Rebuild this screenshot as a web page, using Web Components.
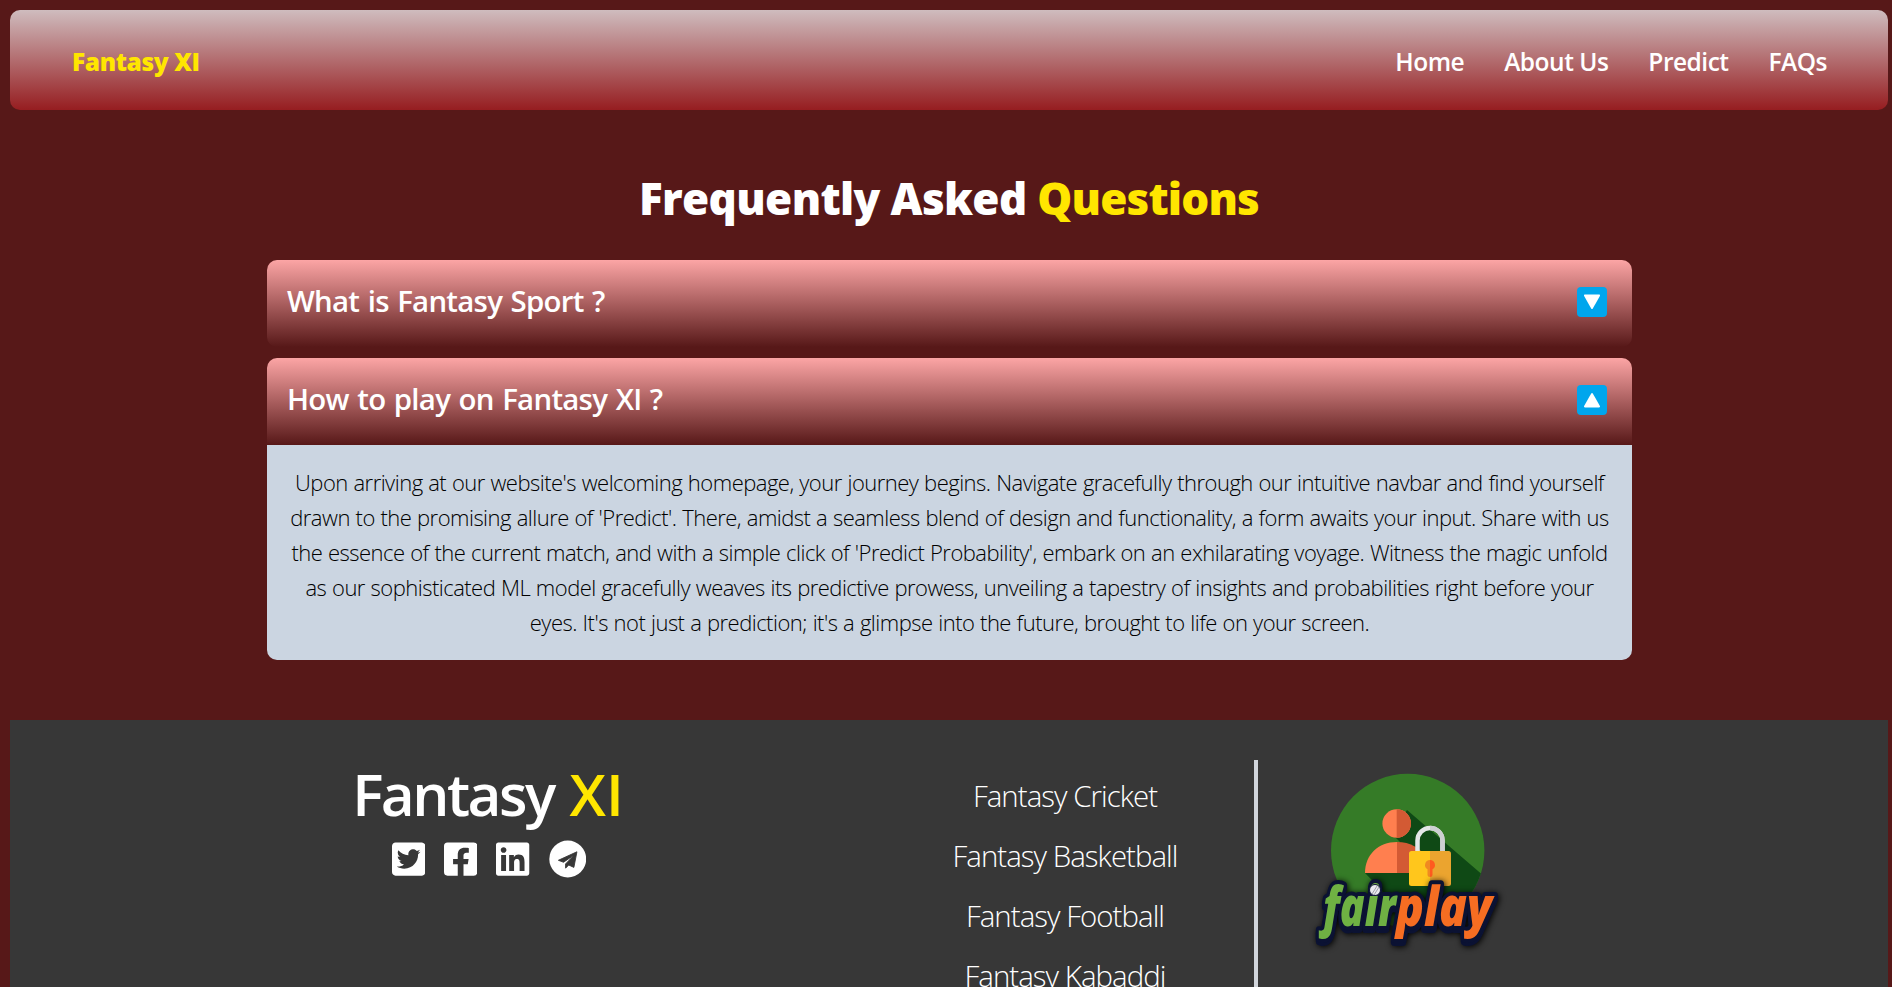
<!DOCTYPE html>
<html lang="en">
<head>
<meta charset="utf-8">
<title>Fantasy XI - FAQs</title>
<style>
html,body{margin:0;height:987px;overflow:hidden;background:#571818}
body{font-family:"Open Sans","Noto Sans",sans-serif;color:#fff}
</style>
</head>
<body>
<fx-page>
  <fx-navbar>
    <fx-link>Home</fx-link><fx-link>About Us</fx-link><fx-link>Predict</fx-link><fx-link>FAQs</fx-link>
  </fx-navbar>
  <fx-heading>Frequently Asked <span slot="accent">Questions</span></fx-heading>
  <fx-faq><span slot="title">What is Fantasy Sport ?</span></fx-faq>
  <fx-faq open><span slot="title">How to play on Fantasy XI ?</span>Upon arriving at our website's welcoming homepage, your journey begins. Navigate gracefully through our intuitive navbar and find yourself<br>drawn to the promising allure of 'Predict'. There, amidst a seamless blend of design and functionality, a form awaits your input. Share with us<br>the essence of the current match, and with a simple click of 'Predict Probability', embark on an exhilarating voyage. Witness the magic unfold<br>as our sophisticated ML model gracefully weaves its predictive prowess, unveiling a tapestry of insights and probabilities right before your<br>eyes. It's not just a prediction; it's a glimpse into the future, brought to life on your screen.</fx-faq>
  <fx-footer>
    <fx-brand slot="brand"></fx-brand>
    <span>Fantasy Cricket</span><span>Fantasy Basketball</span><span>Fantasy Football</span><span>Fantasy Kabaddi</span>
    <fx-fairplay slot="badge"></fx-fairplay>
  </fx-footer>
</fx-page>
<script>
const define = (name, html) => customElements.define(name, class extends HTMLElement {
  constructor() {
    super();
    this.attachShadow({ mode: 'open' }).innerHTML = html;
  }
});

define('fx-page', `
<style>:host{display:flex;flex-direction:column;box-sizing:border-box;height:987px;overflow:hidden;padding:10px 4px 0 10px}</style>
<slot></slot>`);

define('fx-navbar', `
<style>
:host{display:flex;justify-content:space-between;align-items:center;box-sizing:border-box;flex:none;height:100px;padding:2px 61px 0 62px;border-radius:10px;background:linear-gradient(#cfbcbe,#961d20)}
.logo{font-weight:800;font-size:24.5px;letter-spacing:-.4px;color:#ffe600}
nav{display:flex;gap:40px}
</style>
<div class="logo">Fantasy XI</div><nav><slot></slot></nav>`);

define('fx-link', `
<style>:host{display:block;font-weight:600;font-size:24.5px;letter-spacing:-.5px;white-space:nowrap}</style>
<slot></slot>`);

define('fx-heading', `
<style>
:host{display:block;flex:none;margin:58px 0 32px;text-align:center;font-weight:800;font-size:44px;line-height:60px;letter-spacing:-.65px;white-space:nowrap}
.accent{color:#ffe600;letter-spacing:-.85px}
</style>
<slot></slot><span class="accent"><slot name="accent"></slot></span>`);

define('fx-faq', `
<style>
:host{display:block;flex:none;width:1365px;margin:0 0 11px 257px;border-radius:10px;overflow:hidden}
:host([open]){margin-bottom:60px}
header{display:flex;align-items:center;justify-content:space-between;box-sizing:border-box;height:87px;padding:0 25px 5px 20px;background:linear-gradient(#fca5a5,#571818)}
.title{font-weight:600;font-size:29.4px;line-height:40px;letter-spacing:-.72px;word-spacing:1.500px}
svg{width:30px;height:30px;display:block;position:relative;top:.5px}
:host([open]) svg{transform:scaleY(-1)}
.body{display:none;padding:20px 0;background:#cbd5e1;color:#000;text-align:center;font-weight:300;font-size:22px;line-height:35px;letter-spacing:-.52px;word-spacing:.5px;white-space:nowrap}
:host([open]) .body{display:block}
</style>
<header><div class="title"><slot name="title"></slot></div>
<svg viewBox="0 0 30 30"><rect width="30" height="30" rx="4" fill="#00a6ed"/><path d="M8 7.500h14q1.600 0 .9 1.400l-7.100 12.600q-.8 1.200-1.600 0L7.100 8.900Q6.400 7.500 8 7.500z" fill="#fff"/></svg>
</header><div class="body"><slot></slot></div>`);

define('fx-footer', `
<style>
:host{display:grid;grid-template-columns:866px 382px 1fr;box-sizing:border-box;flex:none;height:267px;overflow:hidden;padding-top:40px;background:#373737}
.brand{padding-left:90px}
.links{display:flex;flex-direction:column;align-items:center;padding-top:6px;border-right:4px solid #d1d5db;font-weight:300;font-size:29.4px;line-height:60px;letter-spacing:-.95px;white-space:nowrap}
.badge{padding-left:42px}
</style>
<div class="brand"><slot name="brand"></slot></div>
<div class="links"><slot></slot></div>
<div class="badge"><slot name="badge"></slot></div>`);

define('fx-brand', `
<style>
:host{display:flex;flex-direction:column;align-items:center}
.name{margin-top:-7px;font-weight:600;font-size:58.500px;line-height:80px;letter-spacing:-2.500px;white-space:nowrap}
.name span{color:#ffe600;letter-spacing:0;margin-left:3px}
.icons{display:flex;gap:19px;margin:7px 0 0 2px;align-items:center}
svg{display:block;height:38px;width:33.250px}
svg.round{width:37.500px}
</style>
<div class="name">Fantasy <span>XI</span></div>
<div class="icons">
<svg viewBox="0 0 448 512" fill="#fff"><path d="M400 32H48C21.5 32 0 53.5 0 80v352c0 26.5 21.5 48 48 48h352c26.5 0 48-21.5 48-48V80c0-26.5-21.5-48-48-48zm-48.9 158.8c.2 2.8.2 5.7.2 8.5 0 86.7-66 186.6-186.6 186.6-37.2 0-71.7-10.8-100.7-29.4 5.3.6 10.4.8 15.8.8 30.7 0 58.9-10.4 81.4-28-28.8-.6-53-19.5-61.3-45.5 10.1 1.5 19.2 1.5 29.6-1.2-30-6.1-52.5-32.5-52.5-64.4v-.8c8.7 4.9 18.9 7.9 29.6 8.3a65.447 65.447 0 0 1-29.2-54.6c0-12.2 3.2-23.4 8.9-33.1 32.3 39.8 80.8 65.8 135.2 68.6-9.3-44.5 24-80.6 64-80.6 18.9 0 35.9 7.9 47.9 20.7 14.8-2.8 29-8.3 41.6-15.8-4.9 15.2-15.2 28-28.8 36.1 13.2-1.4 26-5.1 37.8-10.2-8.9 13.1-20.1 24.7-32.9 34z"/></svg>
<svg viewBox="0 0 448 512" fill="#fff"><path d="M400 32H48A48 48 0 0 0 0 80v352a48 48 0 0 0 48 48h137.250V327.690h-63V256h63v-54.640c0-62.150 37-96.480 93.670-96.480 27.140 0 55.520 4.840 55.520 4.840v61h-31.270c-30.810 0-40.420 19.120-40.420 38.730V256h68.780l-11 71.690h-57.780V480H400a48 48 0 0 0 48-48V80a48 48 0 0 0-48-48z"/></svg>
<svg viewBox="0 0 448 512" fill="#fff"><path d="M416 32H31.900C14.300 32 0 46.500 0 64.300v383.400C0 465.500 14.300 480 31.900 480H416c17.600 0 32-14.500 32-32.300V64.300c0-17.800-14.400-32.300-32-32.300zM135.400 416H69V202.200h66.500V416zm-33.200-243c-21.300 0-38.500-17.300-38.500-38.500S80.900 96 102.200 96c21.200 0 38.500 17.300 38.500 38.500 0 21.300-17.200 38.500-38.500 38.500zm282.100 243h-66.400V312c0-24.800-.5-56.700-34.500-56.700-34.600 0-39.900 27-39.900 54.900V416h-66.400V202.200h63.700v29.200h.9c8.900-16.800 30.600-34.500 62.900-34.500 67.200 0 79.700 44.300 79.700 101.900V416z"/></svg>
<svg class="round" viewBox="0 0 38 38"><circle cx="19" cy="19" r="18.700" fill="#fff"/><path d="M28.300 11.700 9.500 20.300l5.200 2L25.500 15 16.800 24v4.300l3.200-3.200 5.200 2.400z" fill="#373737" stroke="#373737" stroke-width=".9" stroke-linejoin="round"/></svg>
</div>`);

define('fx-fairplay', `
<style>:host{display:block}svg{display:block;width:210px;height:200px}
text{font-family:"Open Sans","Noto Sans",sans-serif;font-weight:800;font-style:italic;font-size:54px;stroke:#0b1233;stroke-width:8px;stroke-linejoin:round;paint-order:stroke}
.word{filter:drop-shadow(0 3px 0 #0b1233) drop-shadow(1px 1px 3px #000)}</style>
<svg viewBox="0 0 210 200">
<defs>
<clipPath id="disc"><circle cx="107.700" cy="90.500" r="76.700"/></clipPath>
</defs>
<circle cx="107.700" cy="90.500" r="76.700" fill="#357b27"/>
<path clip-path="url(#disc)" d="M107 50 200 130V180H130L65 113 100 82 92 74z" fill="#0f4915"/>
<circle cx="96.700" cy="63.500" r="14.300" fill="#ff7f4f"/><path d="M96.700 49.200a14.300 14.300 0 0 1 0 28.600z" fill="#d35a34"/>
<path d="M65 113c0-18 13-31 32-31v31z" fill="#ff7f4f"/><path d="M97 82c13 0 25 6 29 17v14H97z" fill="#d35a34"/>
<path d="M117.500 92V80.500a12.500 12.500 0 0 1 25 0V92" fill="none" stroke="#e4e7e8" stroke-width="4.500"/><path d="M130 68a12.500 12.500 0 0 1 12.500 12.500V92" fill="none" stroke="#cdd0d2" stroke-width="4.500"/>
<path d="M130 91h-18.500q-2.500 0-2.500 2.500v30q0 2.500 2.500 2.500H130z" fill="#ffc61c"/><path d="M130 91h18.500q2.500 0 2.500 2.500v30q0 2.500-2.500 2.500H130z" fill="#eba42f"/>
<path d="M130 100a5 5 0 0 0-2.500 9.300V115q0 2 2.500 2z" fill="#f08a21"/><path d="M130 100a5 5 0 0 1 2.500 9.300V115q0 2-2.500 2z" fill="#ff5a1f"/>
<g class="word">
<text x="23" y="166" textLength="73" lengthAdjust="spacingAndGlyphs" fill="#6fb143">fair</text>
<text x="96" y="166" textLength="96" lengthAdjust="spacingAndGlyphs" fill="#f66d22">play</text>
</g>
<circle cx="75" cy="130" r="5.500" fill="#e9e9ee" stroke="#0b1233"/><path d="M72 134 77 126M74 135 79 127" stroke="#8b8d98" stroke-width=".8"/>
</svg>`);
</script>
</body>
</html>
